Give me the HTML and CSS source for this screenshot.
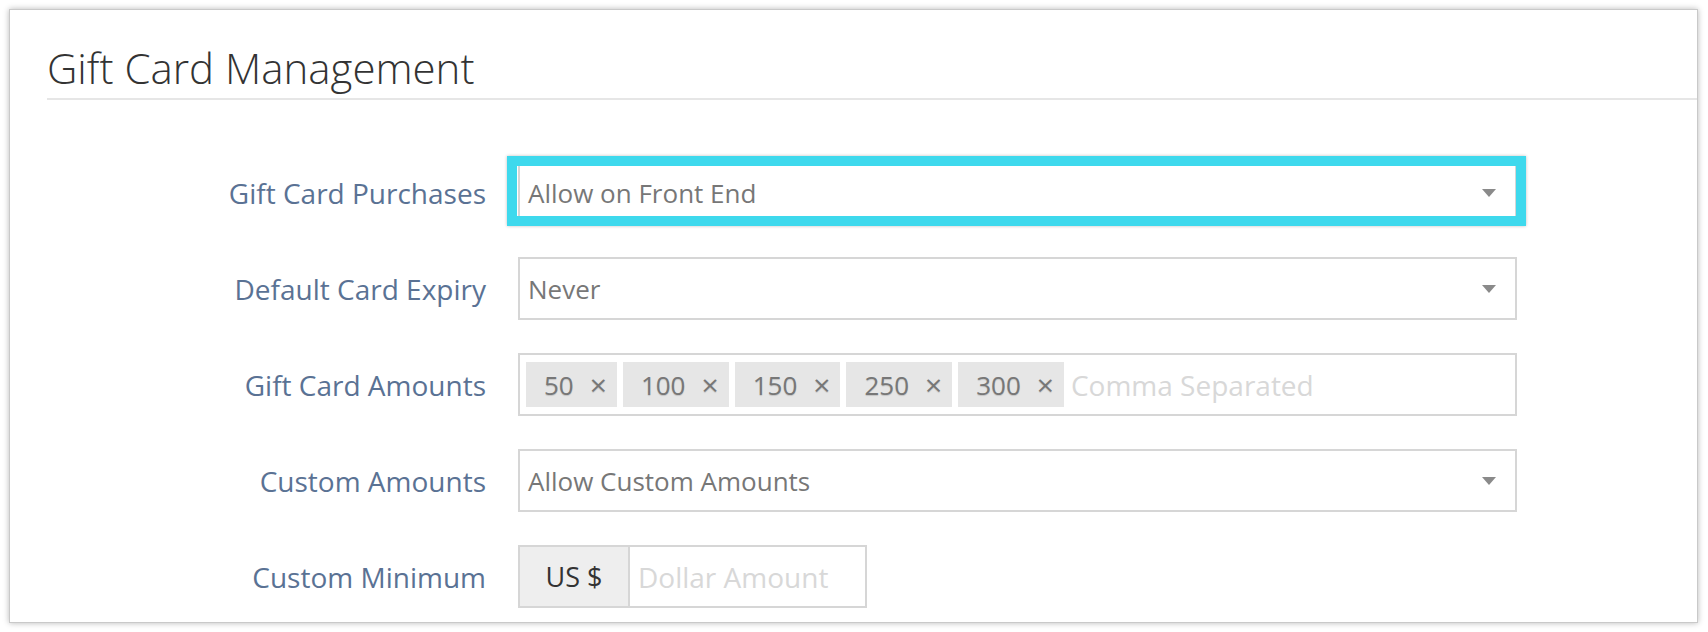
FILE: index.html
```html
<!DOCTYPE html>
<html>
<head>
<meta charset="utf-8">
<title>Gift Card Management</title>
<link rel="stylesheet" href="styles.css">
</head>
<body>
<div class="card">
  <div class="header">
    <h1 class="title">Gift Card Management</h1>
  </div>
  <form class="form">
    <div class="row">
      <label class="label">Gift Card Purchases</label>
      <div class="field highlight">
        <div class="select"><span class="value">Allow on Front End</span><span class="caret"></span></div>
      </div>
    </div>
    <div class="row">
      <label class="label">Default Card Expiry</label>
      <div class="field">
        <div class="select"><span class="value">Never</span><span class="caret"></span></div>
      </div>
    </div>
    <div class="row">
      <label class="label">Gift Card Amounts</label>
      <div class="field">
        <div class="tags">
          <span class="tag"><span class="num">50</span><span class="x">×</span></span>
          <span class="tag"><span class="num">100</span><span class="x">×</span></span>
          <span class="tag"><span class="num">150</span><span class="x">×</span></span>
          <span class="tag"><span class="num">250</span><span class="x">×</span></span>
          <span class="tag"><span class="num">300</span><span class="x">×</span></span>
          <span class="placeholder">Comma Separated</span>
        </div>
      </div>
    </div>
    <div class="row">
      <label class="label">Custom Amounts</label>
      <div class="field">
        <div class="select"><span class="value">Allow Custom Amounts</span><span class="caret"></span></div>
      </div>
    </div>
    <div class="row">
      <label class="label">Custom Minimum</label>
      <div class="field">
        <div class="group">
          <span class="addon">US $</span>
          <span class="amount">Dollar Amount</span>
        </div>
      </div>
    </div>
  </form>
</div>
</body>
</html>
```
FILE: styles.css
```css
* { box-sizing: border-box; }
html, body { margin: 0; padding: 0; background: #ffffff; }
body {
  font-family: "Open Sans", "DejaVu Sans", sans-serif;
  width: 1708px;
  height: 632px;
  overflow: hidden;
}
.card {
  margin: 9px 0 0 9px;
  width: 1689px;
  height: 614px;
  background: #ffffff;
  border: 1px solid #c9c9c9;
  box-shadow: 0 0 6px rgba(0, 0, 0, 0.28);
  overflow: hidden;
}
.header {
  margin-left: 37px;
  padding-top: 33px;
  padding-bottom: 5px;
  border-bottom: 2px solid #e6e6e6;
}
.title {
  margin: 0;
  font-size: 42px;
  font-weight: 300;
  line-height: 50px;
  color: #333333;
}
.form {
  margin-top: 61px;
  display: flex;
  flex-direction: column;
  gap: 33px;
}
.row {
  display: grid;
  grid-template-columns: 476px 999px;
  column-gap: 32px;
  align-items: center;
  height: 63px;
}
.label {
  text-align: right;
  font-size: 28px;
  color: #5a7294;
}
.field { position: relative; height: 63px; }
.highlight::after {
  content: "";
  position: absolute;
  top: -5px;
  left: -11px;
  right: -9px;
  bottom: -2px;
  border: 10px solid #3ed9ed;
  box-shadow: 0 0 3px rgba(0, 0, 0, 0.25);
}
.select {
  height: 63px;
  border: 2px solid #d6d6d6;
  display: flex;
  align-items: center;
  justify-content: space-between;
  padding: 0 19px 0 8px;
  background: #fff;
}
.value {
  font-size: 26px;
  color: #777777;
}
.caret {
  width: 0;
  height: 0;
  border-left: 7.5px solid transparent;
  border-right: 7.5px solid transparent;
  border-top: 8px solid #8a8a8a;
}
.tags {
  height: 63px;
  border: 2px solid #d6d6d6;
  display: flex;
  align-items: center;
  gap: 6px;
  padding: 0 6px;
}
.tag {
  display: flex;
  align-items: center;
  height: 45px;
  background: #e6e6e6;
  padding: 0 10px 0 18px;
  font-size: 26px;
  color: #777777;
  text-shadow: 0 1px 1px rgba(0, 0, 0, 0.15);
}
.tag .x {
  margin-left: 16px;
  font-size: 30px;
  line-height: 1;
}
.placeholder {
  margin-left: 1px;
  font-size: 28px;
  color: #d8d8d8;
}
.group {
  display: flex;
  width: 349px;
  height: 63px;
  border: 2px solid #d6d6d6;
}
.addon {
  width: 110px;
  display: flex;
  align-items: center;
  justify-content: center;
  background: #eeeeee;
  border-right: 2px solid #d6d6d6;
  font-size: 27px;
  color: #333333;
}
.amount {
  display: flex;
  align-items: center;
  padding-left: 8px;
  font-size: 28px;
  color: #d8d8d8;
}
```
